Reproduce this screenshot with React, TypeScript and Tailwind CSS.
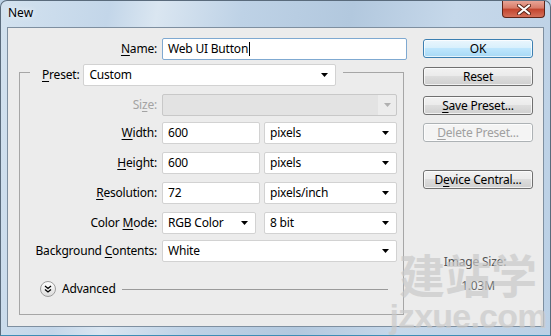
import React from "react";

const font = { fontFamily: '"Noto Sans", "Segoe UI", sans-serif' };

function Arrow({ disabled = false }: { disabled?: boolean }) {
  return (
    <svg width="7" height="4" viewBox="0 0 7 4" className="shrink-0">
      <path d="M0 0H7L3.5 4Z" fill={disabled ? "#b0b0b0" : "#000"} />
    </svg>
  );
}

function Input({ value, w, focused = false }: { value: string; w: string; focused?: boolean }) {
  return (
    <div
      className={`${w} h-[22px] shrink-0 bg-white rounded-[2px] border flex items-center pl-[5px] text-black ${
        focused ? "border-[#7fa9d1]" : "border-[#d2d2d2]"
      }`}
    >
      <span>{value}</span>
      {focused && <span className="w-px h-[14px] bg-black ml-px" />}
    </div>
  );
}

function Combo({ value, w }: { value: string; w: string }) {
  return (
    <div
      className={`${w} h-[22px] shrink-0 bg-white rounded-[2px] border border-[#d2d2d2] flex items-center justify-between pl-[5px] pr-[7px] text-black`}
    >
      <span>{value}</span>
      <Arrow />
    </div>
  );
}

function Label({ children, w = "w-[138px]", disabled = false }: { children: React.ReactNode; w?: string; disabled?: boolean }) {
  return (
    <div className={`${w} shrink-0 text-right pr-[1px] ${disabled ? "text-[#a3a3a3]" : "text-black"}`}>{children}</div>
  );
}

function U({ children }: { children: React.ReactNode }) {
  return <span className="underline underline-offset-2">{children}</span>;
}

function Btn({ children, def = false, disabled = false, mt }: { children: React.ReactNode; def?: boolean; disabled?: boolean; mt: string }) {
  return (
    <div
      className={`${mt} w-[110px] h-[19px] rounded-[3px] border flex items-center justify-center relative overflow-hidden ${
        def
          ? "border-[#3c7fb1] bg-[linear-gradient(#eaf6fd_0%,#d9f0fc_45%,#bee6fd_50%,#a7d9f5_100%)]"
          : disabled
          ? "border-[#adb2b5] bg-[#f4f4f4] text-[#a0a0a0]"
          : "border-[#707070] bg-[linear-gradient(#f2f2f2_0%,#ebebeb_45%,#dddddd_50%,#cfcfcf_100%)]"
      }`}
    >
      <div className="absolute inset-0 rounded-[2px] border border-white/70" />
      <span className="relative leading-none">{children}</span>
    </div>
  );
}

export default function App() {
  return (
    <div
      className="w-[551px] h-[336px] relative overflow-hidden text-[12px] tracking-[-0.2px] bg-[#bcd2e6]"
      style={font}
    >
      <div className="absolute inset-0 rounded-t-[7px] border border-[#5a6b7c] border-b-[#3d8db5] bg-[linear-gradient(100deg,#d3e2ef_0%,#c3d6e9_18%,#dae6f1_26%,#bed2e6_40%,#b2c8de_58%,#c6d8ea_75%,#bbd0e5_100%)]" />
      <div className="relative flex flex-col h-full">
        {/* title bar */}
        <div className="h-[27px] flex items-start justify-between">
          <div className="pl-[8px] pt-[4px] text-[12px] tracking-normal text-black [text-shadow:0_0_6px_#ffffff]">New</div>
          <div className="mr-[6px] mt-[1px] w-[43px] h-[17px] rounded-b-[4px] border border-[#5e2418] border-t-0 bg-[linear-gradient(#e8a496_0%,#d87b68_45%,#c2432c_50%,#d4705a_100%)] flex items-center justify-center">
            <svg width="14" height="11" viewBox="0 0 14 11">
              <path d="M2 1.5L12 9.5M12 1.5L2 9.5" stroke="#5a2418" strokeWidth="4" strokeLinecap="round" />
              <path d="M2 1.5L12 9.5M12 1.5L2 9.5" stroke="#ffffff" strokeWidth="2.2" strokeLinecap="round" />
            </svg>
          </div>
        </div>
        {/* client */}
        <div className="ml-[7px] w-[537px] h-[300px] border border-[#7e8fa0] bg-[#ececec] flex pl-[11px] pt-[10px]">
          {/* left column */}
          <div className="w-[385px] flex flex-col shrink-0">
            <div className="flex items-center gap-[4px]">
              <Label w="w-[139px]">
                <U>N</U>ame:
              </Label>
              <Input value="Web UI Button" w="w-[245px]" focused />
            </div>
            <div className="mt-[12px] h-[243px] border border-[#a6a6a6] flex flex-col">
              <div className="-mt-[9px] ml-[10px] self-start bg-[#ececec] flex items-center pl-[12px] pr-[7px] gap-[4px]">
                <span>
                  <U>P</U>reset:
                </span>
                <Combo value="Custom" w="w-[253px]" />
              </div>
              <div className="mt-[8px] flex items-center gap-[4px]">
                <Label disabled>
                  Si<U>z</U>e:
                </Label>
                <div className="w-[235px] h-[22px] rounded-[2px] border border-[#c8c8c8] bg-[#e3e3e3] flex items-center justify-end">
                  <div className="h-full w-[18px] bg-[#ececec] flex items-center justify-center rounded-r-[2px]">
                    <Arrow disabled />
                  </div>
                </div>
              </div>
              <div className="mt-[6px] flex items-center gap-[4px]">
                <Label>
                  <U>W</U>idth:
                </Label>
                <Input value="600" w="w-[98px]" />
                <Combo value="pixels" w="w-[133px]" />
              </div>
              <div className="mt-[8px] flex items-center gap-[4px]">
                <Label>
                  <U>H</U>eight:
                </Label>
                <Input value="600" w="w-[98px]" />
                <Combo value="pixels" w="w-[133px]" />
              </div>
              <div className="mt-[8px] flex items-center gap-[4px]">
                <Label>
                  <U>R</U>esolution:
                </Label>
                <Input value="72" w="w-[98px]" />
                <Combo value="pixels/inch" w="w-[133px]" />
              </div>
              <div className="mt-[8px] flex items-center">
                <Label>
                  Color <U>M</U>ode:
                </Label>
                <div className="w-[4px] shrink-0" />
                <Combo value="RGB Color" w="w-[94px]" />
                <div className="w-[8px] shrink-0" />
                <Combo value="8 bit" w="w-[133px]" />
              </div>
              <div className="mt-[6px] flex items-center gap-[4px]">
                <Label>
                  Background <U>C</U>ontents:
                </Label>
                <Combo value="White" w="w-[235px]" />
              </div>
              <div className="mt-[18px] ml-[20px] flex items-center">
                <div className="w-[16px] h-[16px] rounded-full border border-[#9c9c9c] bg-[linear-gradient(#ffffff,#dcdcdc)] flex items-center justify-center">
                  <svg width="8" height="8" viewBox="0 0 8 8">
                    <path d="M1 1L4 3.5L7 1M1 4.5L4 7L7 4.5" stroke="#000" strokeWidth="1.3" fill="none" />
                  </svg>
                </div>
                <span className="ml-[6px]">Advanced</span>
                <div className="ml-[6px] w-[266px] h-px bg-[#9a9a9a]" />
              </div>
            </div>
          </div>
          {/* right column */}
          <div className="ml-[19px] w-[110px] flex flex-col pt-[1px]">
            <Btn def mt="mt-0">OK</Btn>
            <Btn mt="mt-[9px]">Reset</Btn>
            <Btn mt="mt-[10px]">
              <U>S</U>ave Preset...
            </Btn>
            <Btn disabled mt="mt-[8px]">
              <U>D</U>elete Preset...
            </Btn>
            <Btn mt="mt-[28px]">
              D<U>e</U>vice Central...
            </Btn>
            <div className="mt-[65px] pr-[6px] text-center text-[#555555] leading-[16px]">Image Size:</div>
            <div className="mt-[8px] text-center text-[#6a6a6a] leading-[16px]">1.03M</div>
          </div>
        </div>
      </div>
      {/* watermark */}
      <div className="absolute left-[394px] top-[247px] w-[148px] flex flex-col items-center pointer-events-none opacity-70 tracking-normal">
        <div
          className="text-[46px] leading-[52px] font-bold text-[#c9c9c9]"
          style={{ fontFamily: '"Noto Sans CJK SC", sans-serif' }}
        >
          建站学
        </div>
        <div
          className="text-[34px] leading-[34px] font-bold text-[#c9c9c9] tracking-[-0.8px]"
          style={{ fontFamily: '"Liberation Sans", sans-serif' }}
        >
          jzxue.com
        </div>
      </div>
    </div>
  );
}
